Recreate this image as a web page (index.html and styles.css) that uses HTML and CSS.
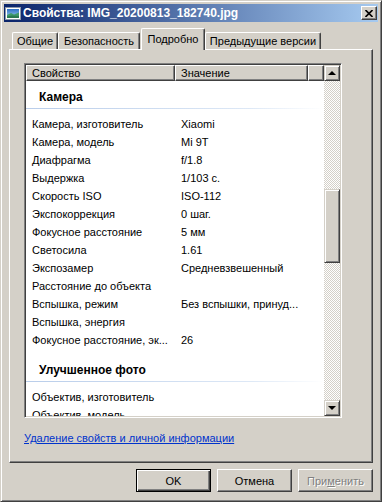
FILE: index.html
```html
<!DOCTYPE html>
<html lang="ru">

<head>
    <meta charset="UTF-8">
    <title>Свойства: IMG_20200813_182740.jpg</title>
    <link rel="stylesheet" href="styles.css">
</head>

<body>
    <div class="window">
        <!-- заголовок окна -->
        <div class="titlebar">
            <svg class="app-icon" width="16" height="16" viewBox="0 0 16 16">
                <defs>
                    <linearGradient id="sky" x1="0" y1="0" x2="0" y2="1">
                        <stop offset="0" stop-color="#2d6fc4" />
                        <stop offset="1" stop-color="#a9d4f2" />
                    </linearGradient>
                </defs>
                <rect x="0.5" y="2.5" width="15" height="12" fill="#fff" stroke="#8a97a8" />
                <rect x="2" y="4" width="12" height="9" fill="url(#sky)" />
                <path d="M2 10 L6 8 L9 9.5 L14 7.5 L14 13 L2 13 Z" fill="#3f9a6a" />
                <path d="M2 11.5 L7 10.5 L14 11 L14 13 L2 13 Z" fill="#2c7a50" />
            </svg>
            <span class="title">Свойства: IMG_20200813_182740.jpg</span>
            <span class="close-btn">
                <svg width="8" height="7" viewBox="0 0 8 7">
                    <path d="M0.5 0 L7.5 7 M7.5 0 L0.5 7" stroke="#000" stroke-width="1.6" />
                </svg>
            </span>
        </div>

        <!-- вкладки -->
        <div class="tabs">
            <div class="tab t1">Общие</div>
            <div class="tab t2">Безопасность</div>
            <div class="tab t3 active">Подробно</div>
            <div class="tab t4">Предыдущие версии</div>
        </div>

        <div class="panel">
            <div class="listview">
                <div class="list-main">
                    <div class="list-header">
                        <div class="col-head col-name">Свойство</div>
                        <div class="col-head col-value">Значение</div>
                        <div class="col-head col-fill"></div>
                    </div>
                    <div class="list-body">
                        <div class="group">
                            <div class="group-title">Камера</div>
                            <div class="group-line"></div>
                        </div>
                        <div class="row"><span class="name">Камера, изготовитель</span><span class="value">Xiaomi</span></div>
                        <div class="row"><span class="name">Камера, модель</span><span class="value">Mi 9T</span></div>
                        <div class="row"><span class="name">Диафрагма</span><span class="value">f/1.8</span></div>
                        <div class="row"><span class="name">Выдержка</span><span class="value">1/103 с.</span></div>
                        <div class="row"><span class="name">Скорость ISO</span><span class="value">ISO-112</span></div>
                        <div class="row"><span class="name">Экспокоррекция</span><span class="value">0 шаг.</span></div>
                        <div class="row"><span class="name">Фокусное расстояние</span><span class="value">5 мм</span></div>
                        <div class="row"><span class="name">Светосила</span><span class="value">1.61</span></div>
                        <div class="row"><span class="name">Экспозамер</span><span class="value">Средневзвешенный</span></div>
                        <div class="row"><span class="name">Расстояние до объекта</span><span class="value"></span></div>
                        <div class="row"><span class="name">Вспышка, режим</span><span class="value">Без вспышки, принуд...</span></div>
                        <div class="row"><span class="name">Вспышка, энергия</span><span class="value"></span></div>
                        <div class="row"><span class="name">Фокусное расстояние, эк...</span><span class="value">26</span></div>
                        <div class="group">
                            <div class="group-title">Улучшенное фото</div>
                            <div class="group-line"></div>
                        </div>
                        <div class="row"><span class="name">Объектив, изготовитель</span><span class="value"></span></div>
                        <div class="row"><span class="name">Объектив, модель</span><span class="value"></span></div>
                    </div>
                </div>
                <!-- полоса прокрутки -->
                <div class="scrollbar">
                    <div class="sb-btn"><span class="arrow-up"></span></div>
                    <div class="sb-track">
                        <div class="sb-thumb"></div>
                    </div>
                    <div class="sb-btn"><span class="arrow-down"></span></div>
                </div>
            </div>
            <a class="remove-link" href="#">Удаление свойств и личной информации</a>
        </div>

        <div class="buttons">
            <button class="btn default">OK</button>
            <button class="btn">Отмена</button>
            <button class="btn disabled">При<u>м</u>енить</button>
        </div>
    </div>
</body>

</html>
```

FILE: styles.css
```css
* {
    margin: 0;
    padding: 0;
    box-sizing: border-box;
}

body {
    width: 382px;
    height: 502px;
    overflow: hidden;
    background: #d4d0c8;
    font-family: "Liberation Sans", Arial, sans-serif;
    font-size: 11px;
    color: #000;
}

.window {
    width: 382px;
    height: 502px;
    padding: 3px;
    border: 1px solid;
    border-color: #d4d0c8 #404040 #404040 #d4d0c8;
    box-shadow: inset 1px 1px #fff, inset -1px -1px #808080;
    display: flex;
    flex-direction: column;
}

/* заголовок ------------------------------------------ */

.titlebar {
    height: 18px;
    display: flex;
    align-items: center;
    padding-left: 1px;
    background: linear-gradient(to right, #0a246a, #a6caf0);
}

.app-icon {
    flex: none;
}

.title {
    flex: 1;
    margin-left: 2px;
    color: #fff;
    font-weight: bold;
    font-size: 12px;
    white-space: nowrap;
}

.close-btn {
    width: 16px;
    height: 14px;
    margin-right: 1px;
    display: flex;
    align-items: center;
    justify-content: center;
    background: #d4d0c8;
    border: 1px solid;
    border-color: #fff #404040 #404040 #fff;
    box-shadow: inset -1px -1px #808080;
}

/* вкладки ------------------------------------------ */

.tabs {
    height: 21px;
    margin: 6px 5px 0;
    padding-left: 3px;
    display: flex;
    align-items: flex-end;
}

.tab {
    height: 17px;
    padding-top: 2px;
    text-align: center;
    white-space: nowrap;
    border: 1px solid;
    border-bottom: none;
    border-color: #fff #404040 #404040 #fff;
    border-radius: 2px 2px 0 0;
    box-shadow: inset -1px 0 #808080;
}

.t1 {
    width: 46px;
}

.t2 {
    width: 82px;
}

.t3 {
    width: 64px;
    margin-left: 1px;
}

.t4 {
    width: 116px;
}

.tab.active {
    height: 22px;
    margin-bottom: -1px;
    padding-top: 4px;
    position: relative;
    z-index: 1;
    background: #d4d0c8;
}

/* панель ------------------------------------------ */

.panel {
    height: 414px;
    margin: 0 5px;
    padding: 13px 0 0 14px;
    border: 1px solid;
    border-color: #fff #404040 #404040 #fff;
    box-shadow: inset -1px -1px #808080;
}

.listview {
    width: 318px;
    height: 355px;
    padding: 1px;
    display: flex;
    background: #fff;
    border: 1px solid;
    border-color: #808080 #fff #fff #808080;
    box-shadow: inset 1px 1px #404040, inset -1px -1px #d4d0c8;
}

.list-main {
    flex: 1;
    overflow: hidden;
}

.list-header {
    height: 16px;
    display: flex;
}

.col-head {
    height: 16px;
    line-height: 14px;
    padding-left: 5px;
    background: #d4d0c8;
    border: 1px solid;
    border-color: #fff #404040 #404040 #fff;
    box-shadow: inset -1px -1px #808080;
}

.col-name {
    width: 149px;
}

.col-value {
    width: 133px;
}

.col-fill {
    flex: 1;
}

.group {
    padding-top: 12px;
    padding-bottom: 6px;
}

.group:first-child {
    padding-top: 7px;
}

.group-title {
    height: 18px;
    line-height: 18px;
    padding-left: 13px;
    font-weight: bold;
    font-size: 12px;
    margin-bottom: 2px;
}

.group-line {
    height: 1px;
    background: linear-gradient(to right, #b9cdea, #dde8f6 75%, #fff);
}

.row {
    height: 18px;
    line-height: 18px;
    display: flex;
    white-space: nowrap;
}

.name {
    width: 149px;
    padding-left: 6px;
    padding-right: 2px;
    overflow: hidden;
}

.value {
    width: 133px;
    padding-left: 6px;
    padding-right: 4px;
    overflow: hidden;
}

/* прокрутка ------------------------------------------ */

.scrollbar {
    width: 16px;
    display: flex;
    flex-direction: column;
}

.sb-btn {
    height: 16px;
    display: flex;
    align-items: center;
    justify-content: center;
    background: #d4d0c8;
    border: 1px solid;
    border-color: #d4d0c8 #404040 #404040 #d4d0c8;
    box-shadow: inset 1px 1px #fff, inset -1px -1px #808080;
}

.arrow-up {
    width: 0;
    height: 0;
    border-left: 4px solid transparent;
    border-right: 4px solid transparent;
    border-bottom: 4px solid #000;
}

.arrow-down {
    width: 0;
    height: 0;
    border-left: 4px solid transparent;
    border-right: 4px solid transparent;
    border-top: 4px solid #000;
}

.sb-track {
    flex: 1;
    background: repeating-conic-gradient(#d4d0c8 0 25%, #fff 0 50%) 0 0 / 2px 2px;
}

.sb-thumb {
    height: 74px;
    margin-top: 108px;
    background: #d4d0c8;
    border: 1px solid;
    border-color: #d4d0c8 #404040 #404040 #d4d0c8;
    box-shadow: inset 1px 1px #fff, inset -1px -1px #808080;
}

.remove-link {
    display: inline-block;
    margin-top: 13px;
    line-height: 14px;
    color: #0033cc;
    text-decoration: underline;
}

/* кнопки ------------------------------------------ */

.buttons {
    margin: 6px 5px 0;
    display: flex;
    justify-content: flex-end;
    gap: 6px;
}

.btn {
    width: 75px;
    height: 23px;
    font-family: "Liberation Sans", Arial, sans-serif;
    font-size: 11px;
    color: #000;
    background: #d4d0c8;
    border: 1px solid;
    border-color: #fff #404040 #404040 #fff;
    box-shadow: inset -1px -1px #808080;
}

.btn.default {
    border-color: #000;
    box-shadow: inset 1px 1px #fff, inset -1px -1px #404040, inset -2px -2px #808080;
}

.btn.disabled {
    color: #808080;
    text-shadow: 1px 1px #fff;
}
```
